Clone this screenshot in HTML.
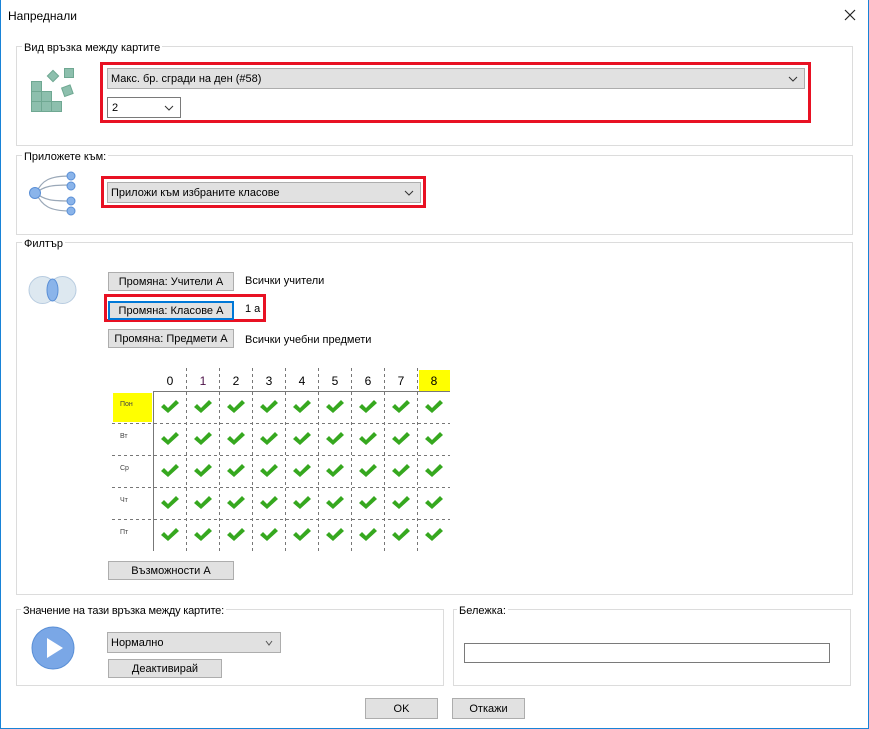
<!DOCTYPE html>
<html><head><meta charset="utf-8"><style>
*{box-sizing:border-box}
body{margin:0;width:869px;height:729px;background:#fff;font-family:"Liberation Sans",sans-serif;font-size:11px;color:#000;position:relative;overflow:hidden}
.a{position:absolute}
.win{left:0;top:0;width:869px;height:729px;border:1px solid #1883d7;border-top:none}
.grp{border:1px solid #dcdcdc}
.lg{background:#fff;padding:0 2px;font-size:11px;line-height:14px}
.btn{background:#e1e1e1;border:1px solid #adadad;text-align:center;line-height:19px;font-size:11px}
.combo{background:#e1e1e1;border:1px solid #adadad;line-height:21px;padding-left:3px}
.red{border:3px solid #e81123}
.chev{position:absolute;right:6px;top:5px;width:10px;height:10px}
</style></head><body>
<div class="a win"></div>
<div class="a" style="left:8px;top:9px;font-size:12px">Напреднали</div>
<svg class="a" style="left:844px;top:9px" width="12" height="12"><path d="M1 1L11 11M11 1L1 11" stroke="#222" stroke-width="1.2"/></svg>

<div class="a grp" style="left:16px;top:46px;width:837px;height:100px"></div>
<div class="a lg" style="left:22px;top:41px">Вид връзка между картите</div>
<svg class="a" style="left:28px;top:66px" width="50" height="48">
<g fill="#8dbfad" stroke="#6fa892" stroke-width="1">
<rect x="3.5" y="15.5" width="10" height="10"/><rect x="3.5" y="25.5" width="10" height="10"/><rect x="13.5" y="25.5" width="10" height="10"/><rect x="3.5" y="35.5" width="10" height="10"/><rect x="13.5" y="35.5" width="10" height="10"/><rect x="23.5" y="35.5" width="10" height="10"/>
<rect x="36.5" y="2.5" width="9" height="9"/>
<rect x="21" y="6" width="8" height="8" transform="rotate(45 25 10)"/>
<rect x="35" y="20" width="9" height="9" transform="rotate(-20 40 25)"/>
</g></svg>
<div class="a red" style="left:100px;top:62px;width:711px;height:61px"></div>
<div class="a combo" style="left:107px;top:68px;width:698px;height:21px">Макс. бр. сгради на ден (#58)<svg class="chev" viewBox="0 0 10 10"><path d="M1 3l4 4 4-4" fill="none" stroke="#333"/></svg></div>
<div class="a" style="left:107px;top:97px;width:74px;height:21px;border:1px solid #7a7a7a;background:#fff;line-height:21px;padding-left:4px">2<svg class="chev" viewBox="0 0 10 10"><path d="M1 3l4 4 4-4" fill="none" stroke="#333"/></svg></div>

<div class="a grp" style="left:16px;top:155px;width:837px;height:80px"></div>
<div class="a lg" style="left:22px;top:150px">Приложете към:</div>
<svg class="a" style="left:28px;top:170px" width="50" height="50">
<g fill="none" stroke="#9aa8b8" stroke-width="1.2">
<path d="M8 23 C14 10 22 6 42 6"/><path d="M8 23 C16 16 24 15 42 15"/><path d="M8 23 C16 30 24 31 42 31"/><path d="M8 23 C14 36 22 41 42 41"/></g>
<g fill="#8ab4ea" stroke="#5a8fd6"><circle cx="7" cy="23" r="5.5"/><circle cx="43" cy="6" r="4"/><circle cx="43" cy="16" r="4"/><circle cx="43" cy="31" r="4"/><circle cx="43" cy="41" r="4"/></g></svg>
<div class="a red" style="left:101px;top:176px;width:325px;height:32px"></div>
<div class="a combo" style="left:107px;top:182px;width:314px;height:21px">Приложи към избраните класове<svg class="chev" viewBox="0 0 10 10"><path d="M1 3l4 4 4-4" fill="none" stroke="#333"/></svg></div>

<div class="a grp" style="left:16px;top:242px;width:837px;height:353px"></div>
<div class="a lg" style="left:22px;top:237px">Филтър</div>
<svg class="a" style="left:28px;top:275px" width="50" height="30">
<circle cx="14.5" cy="15" r="13.5" fill="#dde8f0" stroke="#b8cce0"/><circle cx="34.5" cy="15" r="13.5" fill="#dde8f0" stroke="#b8cce0"/>
<ellipse cx="24.5" cy="15" rx="5.5" ry="11" fill="#8ab4ea" stroke="#5a8fd6"/></svg>
<div class="a btn" style="left:108px;top:272px;width:126px;height:19px">Промяна: Учители А</div>
<div class="a" style="left:245px;top:275px">Всички учители</div>
<div class="a red" style="left:104px;top:294px;width:162px;height:28px"></div>
<div class="a btn" style="left:108px;top:301px;width:126px;height:19px;border:2px solid #0078d7;line-height:17px">Промяна: Класове А</div>
<div class="a" style="left:245px;top:303px">1 а</div>
<div class="a btn" style="left:108px;top:329px;width:126px;height:19px">Промяна: Предмети А</div>
<div class="a" style="left:245px;top:334px">Всички учебни предмети</div>

<svg class="a" style="left:100px;top:360px" width="360" height="200">
<defs><path id="ck" d="M0 7 L3 4 L7 8 L15 0 L18 3 L7 13 Z" fill="#36a81f"/></defs>
<rect x="319" y="10" width="31" height="21" fill="#ff0"/>
<rect x="13" y="33" width="39" height="29" fill="#ff0"/>
<g stroke="#777" stroke-dasharray="3,3" stroke-width="1">
<path d="M86.5 8V191M119.5 8V191M152.5 8V191M185.5 8V191M218.5 8V191M251.5 8V191M284.5 8V191M317.5 8V191"/>
<path d="M12 63.5H350M12 95.5H350M12 127.5H350M12 159.5H350"/></g>
<path d="M53.5 31V191M53 31.5H350" stroke="#777" fill="none"/>
<g font-family="Liberation Sans" font-size="12" text-anchor="middle">
<text x="70" y="25">0</text><text x="103" y="25" fill="#4b0f46">1</text><text x="136" y="25">2</text><text x="169" y="25">3</text><text x="202" y="25">4</text><text x="235" y="25">5</text><text x="268" y="25">6</text><text x="301" y="25">7</text><text x="334" y="25">8</text></g>
<g font-family="Liberation Sans" font-size="7" fill="#444">
<text x="20" y="46">Пон</text><text x="20" y="78">Вт</text><text x="20" y="110">Ср</text><text x="20" y="142">Чт</text><text x="20" y="174">Пт</text></g>
<g id="row"><use href="#ck" x="61" y="40"/><use href="#ck" x="94" y="40"/><use href="#ck" x="127" y="40"/><use href="#ck" x="160" y="40"/><use href="#ck" x="193" y="40"/><use href="#ck" x="226" y="40"/><use href="#ck" x="259" y="40"/><use href="#ck" x="292" y="40"/><use href="#ck" x="325" y="40"/></g>
<use href="#row" y="32"/><use href="#row" y="64"/><use href="#row" y="96"/><use href="#row" y="128"/>
</svg>
<div class="a btn" style="left:108px;top:561px;width:126px;height:19px">Възможности А</div>

<div class="a grp" style="left:16px;top:609px;width:428px;height:77px"></div>
<div class="a lg" style="left:21px;top:604px;letter-spacing:-0.2px">Значение на тази връзка между картите:</div>
<svg class="a" style="left:31px;top:626px" width="46" height="46"><circle cx="22" cy="22" r="21" fill="#7aa7e6" stroke="#5a8fd6"/><path d="M16 12 L32 22 L16 32Z" fill="#fff"/></svg>
<div class="a combo" style="left:107px;top:632px;width:174px;height:21px">Нормално<svg class="chev" viewBox="0 0 10 10"><path d="M2 3l3 4 3-4" fill="none" stroke="#555"/></svg></div>
<div class="a btn" style="left:108px;top:659px;width:114px;height:19px">Деактивирай</div>

<div class="a grp" style="left:453px;top:609px;width:398px;height:77px"></div>
<div class="a lg" style="left:457px;top:604px">Бележка:</div>
<div class="a" style="left:464px;top:643px;width:366px;height:20px;border:1px solid #7a7a7a"></div>

<div class="a btn" style="left:365px;top:698px;width:73px;height:21px;line-height:21px">OK</div>
<div class="a btn" style="left:452px;top:698px;width:73px;height:21px;line-height:21px">Откажи</div>
</body></html>
